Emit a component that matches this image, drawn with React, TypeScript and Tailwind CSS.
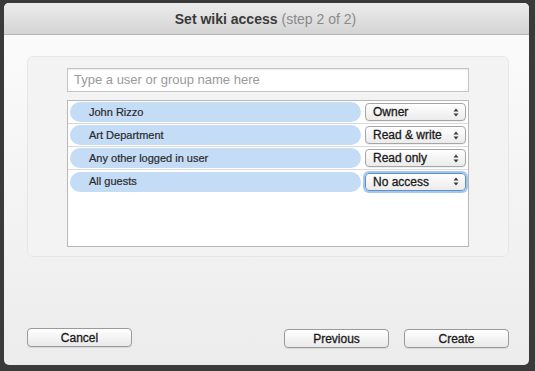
import React from "react";

const font = { fontFamily: '"Liberation Sans", Arial, sans-serif' };

function Arrows() {
  return (
    <svg width="6" height="9" viewBox="0 0 6 9" className="shrink-0">
      <path d="M3 0.5 L5.5 3.5 L0.5 3.5 Z" fill="#3a3a3a" />
      <path d="M3 8.5 L5.5 5.5 L0.5 5.5 Z" fill="#3a3a3a" />
    </svg>
  );
}

function Select({ label, focused }: { label: string; focused?: boolean }) {
  return (
    <div
      className={
        "flex h-[18px] w-[101px] shrink-0 items-center justify-between rounded-[4px] border bg-gradient-to-b from-white to-[#ebebeb] pl-[7px] pr-[6px] text-[12px] text-[#1a1a1a] [-webkit-text-stroke:0.3px_#1a1a1a] " +
        (focused
          ? "border-[#5b8fd0] shadow-[0_0_0_2px_rgba(110,160,220,0.6)]"
          : "border-[#a6a6a6] shadow-[0_1px_0_rgba(0,0,0,0.06)]")
      }
    >
      <span className="leading-none">{label}</span>
      <Arrows />
    </div>
  );
}

function Row({ name, access, focused, last }: { name: string; access: string; focused?: boolean; last?: boolean }) {
  return (
    <div
      className={
        "flex h-[23px] items-center gap-[4px] pl-[2px] pr-[2px] " +
        (last ? "" : "border-b border-[#dadada]")
      }
    >
      <div className="flex h-[20px] w-[291px] items-center rounded-full bg-[#c4dcf6] pl-[19px] text-[11px] text-[#2a2a2a] [-webkit-text-stroke:0.2px_#2a2a2a]">
        {name}
      </div>
      <Select label={access} focused={focused} />
    </div>
  );
}

function Button({ label, w }: { label: string; w: string }) {
  return (
    <div
      className={
        "flex h-[19px] items-center justify-center rounded-[4px] border border-[#9a9a9a] bg-gradient-to-b from-white to-[#e9e9e9] text-[12px] text-[#1a1a1a] [-webkit-text-stroke:0.3px_#1a1a1a] shadow-[0_1px_0_rgba(0,0,0,0.08)] " +
        w
      }
    >
      {label}
    </div>
  );
}

export default function App() {
  return (
    <div
      className="flex h-[371px] w-[535px] flex-col bg-[#3a3a3a] pb-[6px] pl-[4px] pr-[6px] pt-[3px]"
      style={font}
    >
      <div className="flex flex-1 flex-col overflow-hidden rounded-[5px] bg-gradient-to-b from-[#fcfcfc] to-[#ececec]">
        <div className="flex h-[32px] shrink-0 items-center justify-center border-b border-[#b4b4b4] bg-gradient-to-b from-[#ececec] to-[#d4d4d4] pt-[2px] pr-[2px] text-[14px]">
          <span className="font-bold text-[#3a3a3a]">Set wiki access</span>
          <span className="ml-[4px] text-[#8a8a8a]">(step 2 of 2)</span>
        </div>
        <div className="flex flex-1 flex-col pl-[23px] pr-[20px] pt-[21px]">
          <div className="flex h-[201px] flex-col rounded-[6px] border border-[#e6e6e6] bg-[#f3f3f3] pl-[39px] pr-[39px] pt-[11px]">
            <div className="flex h-[24px] items-center border border-[#c4c4c4] bg-white pl-[6px] text-[13px] text-[#9a9a9a] shadow-[inset_0_1px_1px_rgba(0,0,0,0.08)]">
              Type a user or group name here
            </div>
            <div className="mt-[8px] h-[147px] border border-[#b8b8b8] bg-white">
              <Row name="John Rizzo" access="Owner" />
              <Row name="Art Department" access="Read & write" />
              <Row name="Any other logged in user" access="Read only" />
              <Row name="All guests" access="No access" focused last />
            </div>
          </div>
          <div className="mt-[71px] flex items-start">
            <Button label="Cancel" w="w-[105px]" />
            <div className="flex-1" />
            <div className="mt-[1px] flex gap-[15px]">
              <Button label="Previous" w="w-[105px]" />
              <Button label="Create" w="w-[105px]" />
            </div>
          </div>
        </div>
      </div>
    </div>
  );
}
